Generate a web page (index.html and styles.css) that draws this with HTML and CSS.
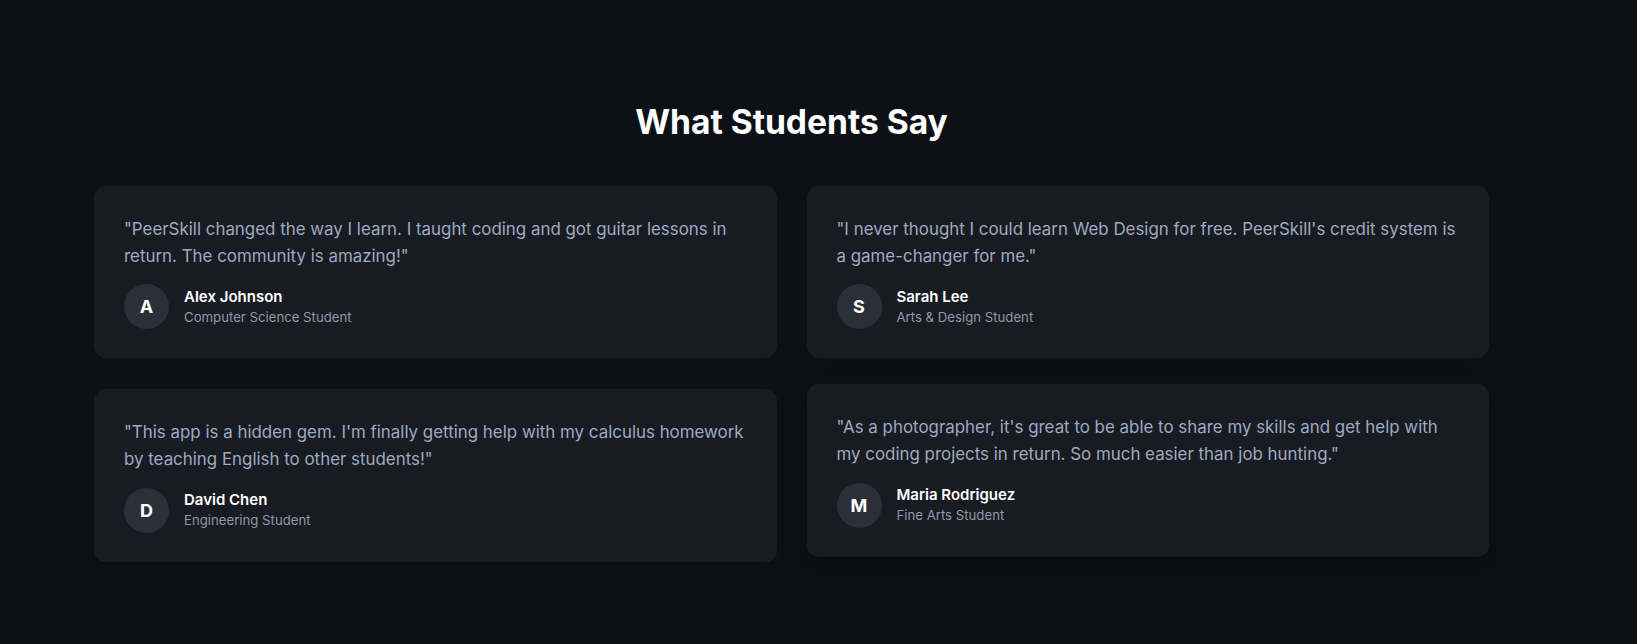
FILE: index.html
```html
<!DOCTYPE html>
<html lang="en">
<head>
<meta charset="utf-8">
<title>What Students Say</title>
<link rel="stylesheet" href="styles.css">
</head>
<body>
<section class="testimonials">
  <div class="container">
    <h2 class="title">What Students Say</h2>
    <div class="grid">
      <div class="card">
        <p class="quote">"PeerSkill changed the way I learn. I taught coding and got guitar lessons in return. The community is amazing!"</p>
        <div class="author">
          <div class="avatar">A</div>
          <div class="info">
            <div class="name">Alex Johnson</div>
            <div class="role">Computer Science Student</div>
          </div>
        </div>
      </div>
      <div class="card">
        <p class="quote">"I never thought I could learn Web Design for free. PeerSkill's credit system is a game-changer for me."</p>
        <div class="author">
          <div class="avatar">S</div>
          <div class="info">
            <div class="name">Sarah Lee</div>
            <div class="role">Arts &amp; Design Student</div>
          </div>
        </div>
      </div>
      <div class="card">
        <p class="quote">"This app is a hidden gem. I'm finally getting help with my calculus homework by teaching English to other students!"</p>
        <div class="author">
          <div class="avatar">D</div>
          <div class="info">
            <div class="name">David Chen</div>
            <div class="role">Engineering Student</div>
          </div>
        </div>
      </div>
      <div class="card card-hover">
        <p class="quote">"As a photographer, it's great to be able to share my skills and get help with my coding projects in return. So much easier than job hunting."</p>
        <div class="author">
          <div class="avatar">M</div>
          <div class="info">
            <div class="name">Maria Rodriguez</div>
            <div class="role">Fine Arts Student</div>
          </div>
        </div>
      </div>
    </div>
  </div>
</section>
</body>
</html>
```
FILE: styles.css
```css
* { box-sizing: border-box; }
html, body {
  margin: 0;
  padding: 0;
  background: #0d1117;
  font-family: Inter, "Noto Sans", sans-serif;
  height: 100%;
}
.testimonials {
  padding: 102px 0 60px;
}
.container {
  margin-left: 94px;
  width: 1395px;
}
.title {
  margin: 0 0 44px;
  text-align: center;
  color: #ffffff;
  font-size: 33.6px;
  font-weight: 700;
  line-height: 1.2;
}
.grid {
  display: grid;
  grid-template-columns: 1fr 1fr;
  column-gap: 30px;
  row-gap: 31px;
  align-items: start;
}
.card {
  background: #181b22;
  border-radius: 12px;
  padding: 30px 26px 29px 30px;
  box-shadow: 0 4px 10px rgba(0, 0, 0, 0.15);
}
.card-hover {
  transform: translateY(-5px);
  box-shadow: 0 10px 25px rgba(0, 0, 0, 0.35);
}
.quote {
  margin: 0 0 14px;
  color: #9eaac0;
  font-size: 16.9px;
  line-height: 1.6;
}
.author {
  display: flex;
  align-items: center;
  gap: 15px;
}
.avatar {
  width: 45px;
  height: 45px;
  border-radius: 50%;
  background: #2b2f37;
  color: #ffffff;
  font-weight: 700;
  font-size: 18px;
  display: flex;
  align-items: center;
  justify-content: center;
  flex-shrink: 0;
}
.name {
  color: #ffffff;
  font-weight: 600;
  font-size: 15px;
  line-height: 20px;
}
.role {
  color: #8f99a8;
  font-size: 13.2px;
  line-height: 20px;
}
```
